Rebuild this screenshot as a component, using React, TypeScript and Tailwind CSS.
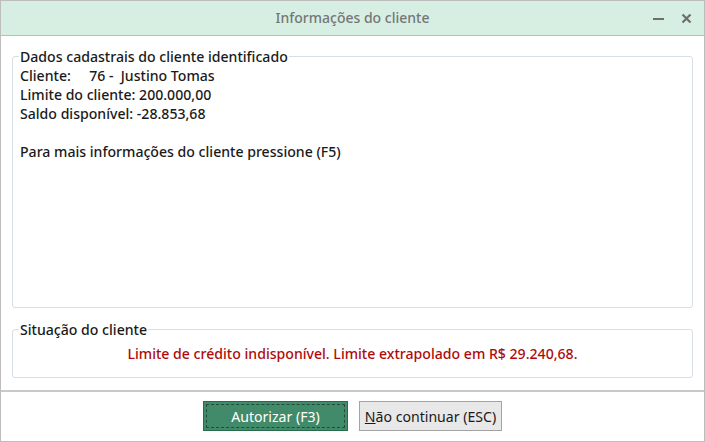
import React from 'react';

export default function App() {
  return (
    <div className="w-[705px] h-[442px] bg-white border border-[#bdbdbd] flex flex-col text-[#1a1a1a] font-['Noto_Sans',sans-serif] font-medium text-[14.1px] leading-[19px]">
      {/* Title bar */}
      <div className="relative h-[35px] shrink-0 bg-[#d7eee3] border-b border-[#bcbcbc] flex items-center justify-center">
        <span className="text-[14px] font-medium text-[#767676] -mt-[1px]">Informações do cliente</span>
        <div className="absolute right-[12px] top-0 h-full flex items-center gap-[17px]">
          <div className="w-[11px] h-[2px] bg-[#6e6e6e] mt-[1px]" />
          <svg width="11" height="11" viewBox="0 0 11 11" className="mt-[1px]">
            <path d="M1.5 1.5 L9.5 9.5 M9.5 1.5 L1.5 9.5" stroke="#6e6e6e" strokeWidth="2.2" />
          </svg>
        </div>
      </div>

      {/* Body */}
      <div className="flex-1 flex flex-col px-[11px] pt-[11px] pb-[12px] gap-[12px]">
        <fieldset className="flex-1 border border-[#d6dee6] rounded-[3px] px-[7px]">
          <legend className="px-[1px] -ml-[1px]">Dados cadastrais do cliente identificado</legend>
          <div className="whitespace-pre">{'Cliente:     76 -  Justino Tomas'}</div>
          <div>Limite do cliente: 200.000,00</div>
          <div>Saldo disponível: -28.853,68</div>
          <div className="h-[19px]" />
          <div>Para mais informações do cliente pressione (F5)</div>
        </fieldset>

        <fieldset className="h-[58px] border border-[#d6dee6] rounded-[3px] px-[7px]">
          <legend className="px-[1px] -ml-[1px]">Situação do cliente</legend>
          <div className="text-center text-[#b00a0a] mt-[5px]">
            Limite de crédito indisponível. Limite extrapolado em R$ 29.240,68.
          </div>
        </fieldset>
      </div>

      {/* Footer */}
      <div className="h-[51px] shrink-0 border-t-2 border-[#c9c9c9] flex items-center justify-center gap-[11px] pb-[1px] font-normal">
        <button className="w-[145px] h-[30px] bg-[#418a6a] border border-[#2a6a4c] p-[2px] text-white">
          <div className="w-full h-full border border-dashed border-[#1f4d38] flex items-center justify-center">
            Autorizar (F3)
          </div>
        </button>
        <button className="w-[143px] h-[30px] bg-[#e8e8e8] border border-[#a3a3a3] text-[#1a1a1a] flex items-center justify-center">
          <span><span className="underline">N</span>ão continuar (ESC)</span>
        </button>
      </div>
    </div>
  );
}
